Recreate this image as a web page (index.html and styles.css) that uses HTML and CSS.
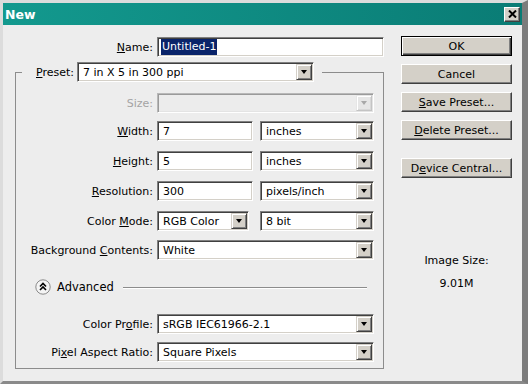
FILE: index.html
```html
<!DOCTYPE html>
<html lang="en">
<head>
    <meta charset="UTF-8">
    <meta name="viewport" content="width=device-width, initial-scale=1.0">
    <title>New</title>
    <link rel="stylesheet" href="styles.css">
</head>
<body>
    <div class="window">
        <div class="titlebar">
            <span class="title">New</span>
            <span class="close-btn">
                <svg width="9" height="8" viewBox="0 0 9 8"><path d="M1 0.5 L8 7.5 M8 0.5 L1 7.5" stroke="#000" stroke-width="2"/></svg>
            </span>
        </div>
        <div class="dialog">
            <div class="main">
                <div class="row name-row">
                    <span class="lbl name-lbl"><u>N</u>ame:</span>
                    <div class="field name-field"><span class="sel-text">Untitled-1</span></div>
                </div>
                <fieldset class="group">
                    <legend class="preset">
                        <span class="preset-lbl"><u>P</u>reset:</span>
                        <div class="field combo preset-combo"><span class="val">7 in X 5 in 300 ppi</span><span class="drop"></span></div>
                    </legend>
                    <div class="row size-row">
                        <span class="lbl disabled">Size:</span>
                        <div class="field combo full off"><span class="val"></span><span class="drop"></span></div>
                    </div>
                    <div class="row width-row">
                        <span class="lbl"><u>W</u>idth:</span>
                        <div class="field num"><span class="val">7</span></div>
                        <div class="field combo unit"><span class="val">inches</span><span class="drop"></span></div>
                    </div>
                    <div class="row">
                        <span class="lbl"><u>H</u>eight:</span>
                        <div class="field num"><span class="val">5</span></div>
                        <div class="field combo unit"><span class="val">inches</span><span class="drop"></span></div>
                    </div>
                    <div class="row">
                        <span class="lbl"><u>R</u>esolution:</span>
                        <div class="field num"><span class="val">300</span></div>
                        <div class="field combo unit"><span class="val">pixels/inch</span><span class="drop"></span></div>
                    </div>
                    <div class="row">
                        <span class="lbl">Color <u>M</u>ode:</span>
                        <div class="field combo mode"><span class="val">RGB Color</span><span class="drop"></span></div>
                        <div class="field combo depth"><span class="val">8 bit</span><span class="drop"></span></div>
                    </div>
                    <div class="row bg-row">
                        <span class="lbl">Background <u>C</u>ontents:</span>
                        <div class="field combo full"><span class="val">White</span><span class="drop"></span></div>
                    </div>
                    <div class="advanced">
                        <span class="adv-btn">
                            <svg width="16" height="16" viewBox="0 0 16 16">
                                <circle cx="8" cy="8" r="7.2" fill="#f4f4f4" stroke="#8a8a8a" stroke-width="1"/>
                                <path d="M5 7.5 L8 4.5 L11 7.5 M5 11 L8 8 L11 11" fill="none" stroke="#000" stroke-width="1.6"/>
                            </svg>
                        </span>
                        <span class="adv-text">Advanced</span>
                        <span class="adv-line"></span>
                    </div>
                    <div class="row profile-row">
                        <span class="lbl">Color Pr<u>o</u>file:</span>
                        <div class="field combo full"><span class="val">sRGB IEC61966-2.1</span><span class="drop"></span></div>
                    </div>
                    <div class="row pixel-row">
                        <span class="lbl">Pi<u>x</u>el Aspect Ratio:</span>
                        <div class="field combo full"><span class="val">Square Pixels</span><span class="drop"></span></div>
                    </div>
                </fieldset>
            </div>
            <div class="side">
                <div class="btn default">OK</div>
                <div class="btn">Cancel</div>
                <div class="btn"><u>S</u>ave Preset...</div>
                <div class="btn"><u>D</u>elete Preset...</div>
                <div class="btn device">D<u>e</u>vice Central...</div>
                <div class="info">
                    <div>Image Size:</div>
                    <div class="info-value">9.01M</div>
                </div>
            </div>
        </div>
    </div>
</body>
</html>
```

FILE: styles.css
```css
/* Classic Windows style "New" document dialog */
body {
    margin: 0;
    font-family: "DejaVu Sans", Tahoma, sans-serif;
    font-size: 11px;
    color: #000;
    background: #ededed;
}
.window {
    width: 528px;
    height: 384px;
    box-sizing: border-box;
    border-style: solid;
    border-width: 3px 6px 3px 3px;
    border-color: #dcdcdc #7c7c7c #8a8a8a #dcdcdc;
    background: #ededed;
}
.titlebar {
    height: 22px;
    display: flex;
    align-items: center;
    justify-content: space-between;
    padding: 0 0 0 2px;
    background: linear-gradient(to right, #13998e, #0a7c75);
}
.title {
    color: #fff;
    font-weight: bold;
    font-size: 12.5px;
}
.close-btn {
    width: 16px;
    height: 15px;
    box-sizing: border-box;
    margin-right: 2px;
    display: flex;
    align-items: center;
    justify-content: center;
    background: #d4d0c8;
    border: 1px solid;
    border-color: #fff #404040 #404040 #fff;
    box-shadow: inset -1px -1px #808080;
}

.dialog {
    display: flex;
    padding-top: 11px;
}
.main {
    width: 381px;
}
.row {
    display: flex;
    align-items: center;
    height: 20px;
}
.lbl {
    width: 137px;
    flex: none;
    text-align: right;
    margin-right: 4px;
    white-space: nowrap;
}
.lbl.disabled {
    color: #a4a4a4;
}
.name-row {
    margin-top: 1px;
}
.name-lbl {
    width: 150px;
}

/* sunken text boxes and combos */
.field {
    height: 20px;
    box-sizing: border-box;
    display: flex;
    align-items: stretch;
    background: #fff;
    border: 1px solid;
    border-color: #808080 #fff #fff #808080;
    box-shadow: inset 1px 1px #404040, inset -1px -1px #d4d0c8;
    padding: 1px;
    flex: none;
}
.field .val {
    flex: 1;
    display: flex;
    align-items: center;
    padding-left: 4px;
    white-space: nowrap;
    overflow: hidden;
}
.name-field {
    width: 227px;
    padding-left: 3px;
    align-items: center;
}
.sel-text {
    background: #0a246a;
    color: #fff;
    padding: 1px 1px;
    line-height: 14px;
}
.drop {
    width: 16px;
    flex: none;
    box-sizing: border-box;
    background: #d4d0c8;
    border: 1px solid;
    border-color: #d4d0c8 #404040 #404040 #d4d0c8;
    box-shadow: inset 1px 1px #fff, inset -1px -1px #808080;
    display: flex;
    align-items: center;
    justify-content: center;
}
.drop::after {
    content: "";
    width: 0;
    height: 0;
    border-left: 3.5px solid transparent;
    border-right: 3.5px solid transparent;
    border-top: 4px solid #000;
}
.field.off {
    background: #ececec;
    border-color: #b8b8b8 #fff #fff #b8b8b8;
    box-shadow: inset 1px 1px #9a9a9a, inset -1px -1px #e4e4e4;
}
.field.off .drop {
    background: #e6e6e6;
    border-color: #e6e6e6 #c4c4c4 #c4c4c4 #e6e6e6;
    box-shadow: inset 1px 1px #fff, inset -1px -1px #d8d8d8;
}
.field.off .drop::after {
    border-top-color: #a8a8a8;
}
.full {
    width: 217px;
}
.num {
    width: 96px;
}
.unit {
    width: 114px;
    margin-left: 7px;
}
.mode {
    width: 92px;
}
.depth {
    width: 114px;
    margin-left: 11px;
}

/* group box */
.group {
    margin: 5px 0 0 12px;
    width: 369px;
    box-sizing: border-box;
    min-width: 0;
    padding: 11px 0 6px 0;
    border: 1px solid #8c8c8c;
}
.preset {
    display: flex;
    align-items: center;
    margin-left: 6px;
    padding: 0 8px 0 14px;
}
.preset-combo {
    width: 237px;
    margin-left: 3px;
}
.row + .row {
    margin-top: 10px;
}
.row.width-row {
    margin-top: 8px;
}
.row.bg-row {
    margin-top: 9px;
}
.advanced {
    display: flex;
    align-items: center;
    height: 16px;
    margin-top: 19px;
    padding-left: 19px;
    padding-right: 16px;
}
.adv-btn {
    display: flex;
    width: 16px;
    height: 16px;
}
.adv-text {
    margin-left: 6px;
    font-size: 11.5px;
}
.adv-line {
    flex: 1;
    margin-left: 9px;
    height: 1px;
    background: #8c8c8c;
    box-shadow: 0 1px #fff;
}
.advanced + .row.profile-row {
    margin-top: 19px;
}
.row.pixel-row {
    margin-top: 8px;
}

/* buttons */
.side {
    margin-left: 17px;
    width: 111px;
}
.btn {
    height: 20px;
    box-sizing: border-box;
    display: flex;
    align-items: center;
    justify-content: center;
    background: #d4d0c8;
    border: 1px solid;
    border-color: #fff #404040 #404040 #fff;
    box-shadow: inset -1px -1px #808080;
    margin-bottom: 8px;
    white-space: nowrap;
}
.btn.default {
    border: 1px solid #000;
    box-shadow: inset 1px 1px #fff, inset -1px -1px #404040, inset -2px -2px #808080;
}
.btn.device {
    margin-top: 18px;
}
.info {
    margin-top: 76px;
    text-align: center;
    line-height: 14px;
}
.info-value {
    margin-top: 9px;
}
```
